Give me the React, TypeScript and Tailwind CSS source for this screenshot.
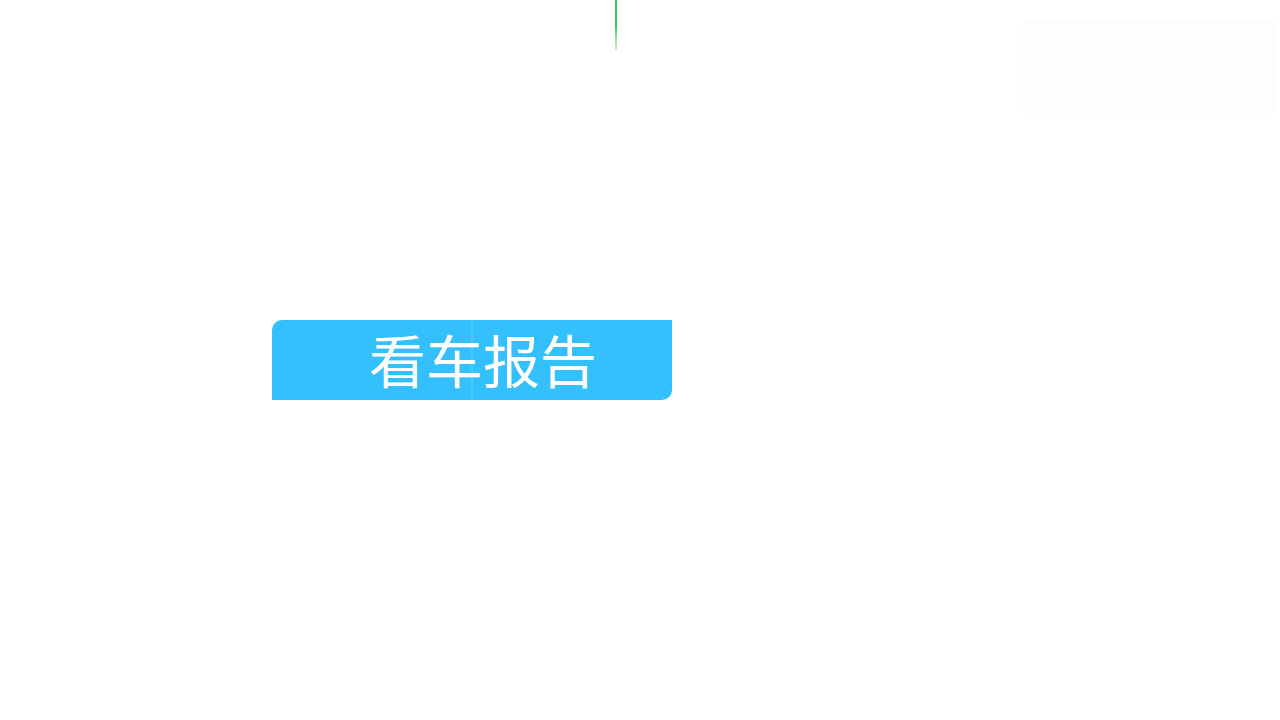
import React from "react";

export default function App() {
  return (
    <div className="relative w-[1280px] h-[720px] bg-white overflow-hidden" style={{ fontFamily: '"Noto Sans CJK SC", "Noto Sans", sans-serif' }}>
      <div className="absolute left-[615px] top-0 w-[2px] h-[50px] bg-gradient-to-b from-[#2ecc55] via-[#2ecc55] to-[#c8f0d2]" />
      <div className="absolute left-[1023px] top-[20px] w-[252px] h-[93px] bg-[#fcfefb] rounded-sm" />
      <div className="flex flex-col h-full">
        <div className="h-[320px]" />
        <div className="flex">
          <div className="w-[272px]" />
          <div className="relative w-[400px] h-[80px] bg-[#33c0fc] rounded-tl-[10px] rounded-br-[10px] flex items-center justify-center pl-[22px] pb-[4px]">
            <div className="absolute left-[199px] top-0 w-[2px] h-full bg-[#5fcdfc] opacity-60" />
            <span className="relative text-white text-[57px] leading-none tracking-[0px]">看车报告</span>
          </div>
        </div>
      </div>
    </div>
  );
}
